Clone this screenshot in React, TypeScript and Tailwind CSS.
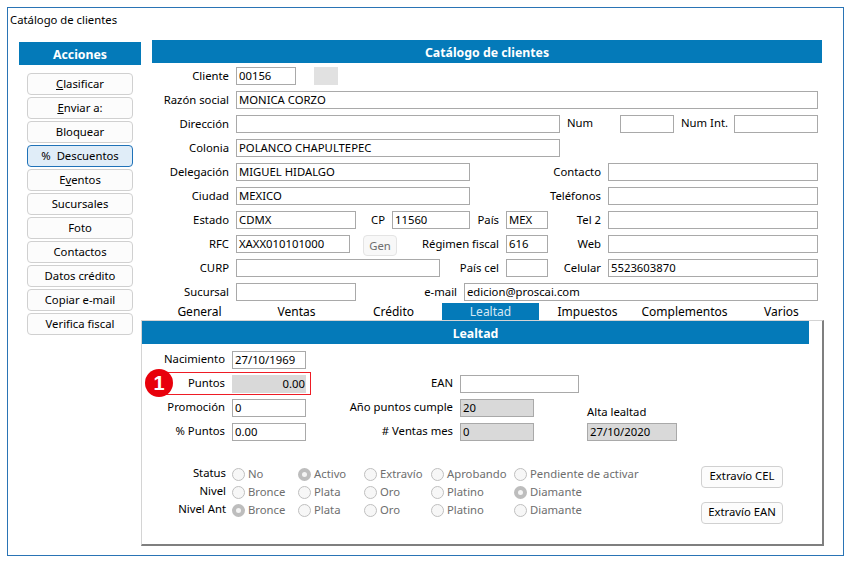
import type { ReactNode } from "react"

const actions: { label: ReactNode; active?: boolean }[] = [
  { label: <><span className="underline">C</span>lasificar</> },
  { label: <><span className="underline">E</span>nviar a:</> },
  { label: "Bloquear" },
  { label: <><span className="mr-[6px]">%</span>Descuentos</>, active: true },
  { label: <>E<span className="underline">v</span>entos</> },
  { label: "Sucursales" },
  { label: "Foto" },
  { label: "Contactos" },
  { label: "Datos crédito" },
  { label: "Copiar e-mail" },
  { label: "Verifica fiscal" },
]

const tabs = ["General", "Ventas", "Crédito", "Lealtad", "Impuestos", "Complementos", "Varios"]

const Field = ({ label, lw, iw, value = "", gray, up }: { label?: string; lw?: string; iw: string; value?: string; gray?: boolean; up?: boolean }) => (
  <>
    {label !== undefined && <div className={`${lw} shrink-0 text-right whitespace-nowrap mr-[7px] ${up ? "-mt-[2px]" : ""}`}>{label}</div>}
    <div className={`${iw} h-[18px] shrink-0 px-[2px] leading-[16px] border ${gray ? "bg-[#d9d9d9] border-[#a9a9a9]" : "bg-white border-[#a9a9a9]"}`}>
      {value}
    </div>
  </>
)

const Row = ({ children }: { children: ReactNode }) => <div className="flex items-center h-[24px]">{children}</div>

const Radio = ({ label, on, w }: { label: string; on?: boolean; w: string }) => (
  <div className={`${w} flex items-center shrink-0 text-[#6e6e6e] whitespace-nowrap`}>
    <span className={`w-[13px] h-[13px] rounded-full shrink-0 mr-[3px] ${on ? "border-[4px] border-[#bdbdbd] bg-[#f4f4f4]" : "border border-[#bfbfbf] bg-[#f7f7f7]"}`} />
    {label}
  </div>
)

const RadioRow = ({ label, items, on }: { label: string; items: string[]; on: number }) => {
  const widths = ["w-[66px]", "w-[66px]", "w-[67px]", "w-[83px]", "w-[120px]"]
  return (
    <div className="flex items-center h-[18px]">
      <div className="w-[84px] text-right mr-[6px] -mt-[2px] text-black">{label}</div>
      {items.map((t, i) => <Radio key={t} label={t} on={i === on} w={widths[i]} />)}
    </div>
  )
}

const SideButton = ({ children, active, w = "w-[106px]" }: { children: ReactNode; active?: boolean; w?: string }) => (
  <div className={`${w} h-[22px] flex items-center justify-center rounded-[4px] border ${active ? "bg-[#e0edf8] border-[#1f72b8]" : "bg-[#fcfcfc] border-[#d0d0d0]"}`}>
    {children}
  </div>
)

export default function App() {
  return (
    <div className="w-[852px] h-[563px] bg-white pt-[7px] pl-[7px] text-[11.3px] leading-[16px] text-black font-['Noto_Sans','Liberation_Sans',sans-serif]">
      <div className="w-[837px] h-[549px] border border-[#2a74b5] flex flex-col">
        <div className="h-[24px] pl-[2px] pt-[4px]">Catálogo de clientes</div>
        <div className="flex pl-[11px] pt-[8px]">
          {/* acciones */}
          <div className="w-[122px] shrink-0 pt-[2px]">
            <div className="h-[23px] pt-[2px] bg-[#047ab9] text-white text-[12.3px] font-bold flex items-center justify-center">Acciones</div>
            <div className="flex flex-col gap-[2px] pl-[8px] pt-[8px]">
              {actions.map((a, i) => <SideButton key={i} active={a.active}>{a.label}</SideButton>)}
            </div>
          </div>

          <div className="flex-1 min-w-0">
            {/* datos del cliente */}
            <div className="pl-[11px]">
              <div className="w-[670px] h-[23px] pt-[2px] bg-[#047ab9] text-white text-[12.3px] font-bold flex items-center justify-center">Catálogo de clientes</div>
              <div className="pt-[1px]">
                <Row>
                  <Field label="Cliente" lw="w-[77px]" iw="w-[60px]" value="00156" />
                  <div className="w-[24px] h-[18px] ml-[18px] bg-[#e1e1e1]" />
                </Row>
                <Row><Field label="Razón social" lw="w-[77px]" iw="w-[582px]" value="MONICA CORZO" /></Row>
                <Row>
                  <Field label="Dirección" lw="w-[77px]" iw="w-[324px]" />
                  <div className="w-[60px] pl-[7px] -mt-[2px]">Num</div>
                  <Field iw="w-[54px]" />
                  <div className="w-[60px] pl-[7px] -mt-[2px] whitespace-nowrap">Num Int.</div>
                  <Field iw="w-[84px]" />
                </Row>
                <Row><Field label="Colonia" lw="w-[77px]" iw="w-[324px]" value="POLANCO CHAPULTEPEC" /></Row>
                <Row>
                  <Field label="Delegación" lw="w-[77px]" iw="w-[234px]" value="MIGUEL HIDALGO" />
                  <Field label="Contacto" lw="w-[131px]" iw="w-[210px]" />
                </Row>
                <Row>
                  <Field label="Ciudad" lw="w-[77px]" iw="w-[234px]" value="MEXICO" />
                  <Field label="Teléfonos" lw="w-[131px]" iw="w-[210px]" />
                </Row>
                <Row>
                  <Field label="Estado" lw="w-[77px]" iw="w-[120px]" value="CDMX" />
                  <Field label="CP" lw="w-[29px]" iw="w-[78px]" value="11560" />
                  <Field label="País" lw="w-[29px]" iw="w-[42px]" value="MEX" />
                  <Field label="Tel 2" lw="w-[53px]" iw="w-[210px]" />
                </Row>
                <Row>
                  <Field label="RFC" lw="w-[77px]" iw="w-[114px]" value="XAXX010101000" />
                  <div className="w-[34px] h-[21px] ml-[13px] mt-[3px] shrink-0 flex items-center justify-center rounded-[4px] border border-[#e4e4e4] bg-[#f8f8f8] text-[#6e6e6e]">Gen</div>
                  <Field label="Régimen fiscal" lw="w-[102px]" iw="w-[42px]" value="616" />
                  <Field label="Web" lw="w-[53px]" iw="w-[210px]" />
                </Row>
                <Row>
                  <Field label="CURP" lw="w-[77px]" iw="w-[204px]" />
                  <Field label="País cel" lw="w-[59px]" iw="w-[42px]" />
                  <Field label="Celular" lw="w-[53px]" iw="w-[210px]" value="5523603870" />
                </Row>
                <Row>
                  <Field label="Sucursal" lw="w-[77px]" iw="w-[120px]" />
                  <Field label="e-mail" lw="w-[101px]" iw="w-[354px]" value="edicion@proscai.com" />
                </Row>
              </div>
              <div className="flex h-[16px] mt-[-1px] -ml-[1px] w-[679px] text-[12px]">
                {tabs.map(t => (
                  <div key={t} className={`w-[97px] h-[17px] text-center leading-[18px] ${t === "Lealtad" ? "bg-[#047ab9] text-[#d5e8f4]" : ""}`}>{t}</div>
                ))}
              </div>
            </div>

            {/* panel lealtad */}
            <div className="w-[683px] h-[226px] mt-[1px] border-t border-l border-[#d4d4d4] border-r-2 border-b-2 border-r-[#7f7f7f] border-b-[#7f7f7f]">
              <div className="w-[667px] h-[23px] pt-[2px] bg-[#047ab9] text-white text-[12.3px] font-bold flex items-center justify-center">Lealtad</div>
              <div className="pt-[4px]">
                <Row><Field label="Nacimiento" lw="w-[83px]" iw="w-[74px]" value="27/10/1969" up /></Row>
                <div className="relative">
                  <Row>
                    <div className="w-[83px] mr-[7px] -mt-[2px] text-right">Puntos</div>
                    <div className="w-[74px] h-[18px] px-[1px] leading-[17px] text-right bg-[#d9d9d9]">0.00</div>
                    <div className="w-[147px] text-right mr-[7px] -mt-[2px]">EAN</div>
                    <Field iw="w-[119px]" />
                  </Row>
                  <div className="absolute left-[17px] top-[0px] w-[152px] h-[23px] border border-[#ee1c25]" />
                  <div className="absolute left-[3px] top-[-3px] w-[28px] h-[28px] rounded-full bg-[#e8000b] text-white text-[20px] font-bold leading-[28px] text-center font-['Liberation_Sans',sans-serif]">1</div>
                </div>
                <Row>
                  <Field label="Promoción" lw="w-[83px]" iw="w-[74px]" value="0" up />
                  <Field label="Año puntos cumple" lw="w-[147px]" iw="w-[74px]" value="20" gray up />
                  <div className="ml-[53px] pt-[7px]">Alta lealtad</div>
                </Row>
                <Row>
                  <Field label="% Puntos" lw="w-[83px]" iw="w-[74px]" value="0.00" up />
                  <Field label="# Ventas mes" lw="w-[147px]" iw="w-[74px]" value="0" gray up />
                  <Field iw="w-[90px] ml-[53px]" value="27/10/2020" gray />
                </Row>
              </div>
              <div className="flex pt-[21px]">
                <div className="w-[559px] shrink-0">
                  <RadioRow label="Status" items={["No", "Activo", "Extravío", "Aprobando", "Pendiente de activar"]} on={1} />
                  <RadioRow label="Nivel" items={["Bronce", "Plata", "Oro", "Platino", "Diamante"]} on={4} />
                  <RadioRow label="Nivel Ant" items={["Bronce", "Plata", "Oro", "Platino", "Diamante"]} on={0} />
                </div>
                <div className="flex flex-col gap-[14px] mt-[1px]">
                  <SideButton w="w-[82px]"><span className="-mt-[2px]">Extravío CEL</span></SideButton>
                  <SideButton w="w-[82px]"><span className="-mt-[2px]">Extravío EAN</span></SideButton>
                </div>
              </div>
            </div>
          </div>
        </div>
      </div>
    </div>
  )
}
